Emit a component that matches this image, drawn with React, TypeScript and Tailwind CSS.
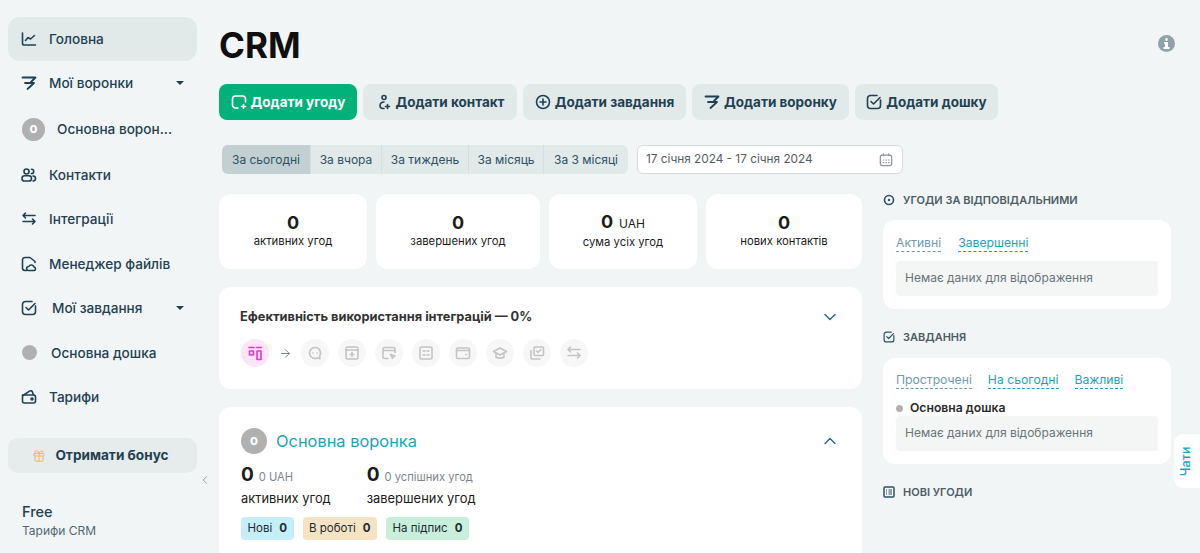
import { ReactNode } from 'react';
import { ArrowRight, ChevronDown, ChevronLeft, ChevronUp, Gift } from 'lucide-react';

const Stroke = ({ children, size = 16, className = '', weight = 1.6 }: { children: ReactNode; size?: number; className?: string; weight?: number }) => (
  <svg width={size} height={size} viewBox="0 0 16 16" fill="none" stroke="currentColor" strokeWidth={weight} strokeLinecap="round" strokeLinejoin="round" className={`shrink-0 ${className}`}>
    {children}
  </svg>
);

const ChartIcon = () => (
  <Stroke>
    <path d="M1.5 2v10.5a1.5 1.5 0 0 0 1.5 1.5h11.5" />
    <path d="M4.5 9.5l2.5-3 2.5 1.5 4-3.5" />
  </Stroke>
);
const FunnelIcon = ({ size = 16 }: { size?: number }) => (
  <Stroke size={size} weight={1.8}>
    <path d="M1.5 2.5h13L10 7" />
    <path d="M4 8h9l-6.500 6" />
  </Stroke>
);
const UsersIcon = () => (
  <Stroke>
    <circle cx="5.5" cy="4.5" r="2.5" />
    <path d="M10.5 2.2a2.2 2.2 0 0 1 0 4.4" />
    <rect x="1" y="8.8" width="9.5" height="5.2" rx="2.6" />
    <path d="M12 9a2.5 2.5 0 0 1 0 5" />
  </Stroke>
);
const SwapIcon = ({ weight = 1.6 }: { weight?: number }) => (
  <Stroke weight={weight}>
    <path d="M4.5 2.5L2 5l2.5 2.5M2 5h12" transform="translate(0 -.5)" />
    <path d="M11.5 8.5L14 11l-2.5 2.5M14 11H2" transform="translate(0 -.5)" />
  </Stroke>
);
const FileIcon = () => (
  <Stroke>
    <path d="M5.5 14.5H4A2.5 2.5 0 0 1 1.500 12V4A2.500 2.500 0 0 1 4 1.500h5l5 4v1" />
    <path d="M7.500 14.500a2 2 0 0 1 .3-4 2.800 2.800 0 0 1 5.200.5 1.800 1.800 0 0 1 .2 3.500z" />
  </Stroke>
);
const TaskIcon = ({ size = 16 }: { size?: number }) => (
  <Stroke size={size}>
    <path d="M14.500 6v5.500a3 3 0 0 1-3 3h-7a3 3 0 0 1-3-3v-7a3 3 0 0 1 3-3H11" />
    <path d="M5 7.500l2.500 2.500 6.500-6.500" />
  </Stroke>
);
const WalletIcon = () => (
  <Stroke>
    <path d="M1.500 7.500v4.500a2 2 0 0 0 2 2h9a2 2 0 0 0 2-2V8a2 2 0 0 0-2-2h-11z" />
    <path d="M2 6.500L8.500 2.200a2 2 0 0 1 3 .8l1 3" />
    <circle cx="11" cy="10" r="1" />
  </Stroke>
);

const Avatar = ({ size }: { size: 'lg' | 'sm' }) => (
  <span className={`flex items-center justify-center rounded-full bg-[#b0b0b0] text-white font-bold shrink-0 ${size === 'lg' ? 'w-[26px] h-[26px] text-[13px]' : 'w-[23px] h-[23px] text-[13px]'}`}>
    о
  </span>
);

const Caret = () => <span className="ml-auto mr-[13px] w-0 h-0 border-x-[4px] border-x-transparent border-t-[4px] border-t-[#1f4152]" />;

const SideItem = ({ icon, label, active, caret, indent = 'gap-[12px]', height = 'h-[44.5px]' }: { icon: ReactNode; label: string; active?: boolean; caret?: boolean; indent?: string; height?: string }) => (
  <div className={`flex items-center ${indent} ${height} pl-[13px] rounded-xl text-[13.6px] font-medium text-[#1f4152] ${active ? 'bg-[#e2e9e9]' : ''}`}>
    {icon}
    <span className="truncate">{label}</span>
    {caret && <Caret />}
  </div>
);

const Sidebar = () => (
  <aside className="w-[205px] shrink-0 pl-2 pr-2 pt-[17px] relative">
    <SideItem icon={<ChartIcon />} label="Головна" active height="h-[44px]" />
    <SideItem icon={<FunnelIcon />} label="Мої воронки" caret height="h-[44px]" />
    <div className="pl-[1px]">
      <SideItem icon={<Avatar size="sm" />} label="Основна ворон..." height="h-[48px]" />
    </div>
    <SideItem icon={<UsersIcon />} label="Контакти" height="h-[44px]" />
    <SideItem icon={<SwapIcon />} label="Інтеграції" height="h-[44.5px]" />
    <SideItem icon={<FileIcon />} label="Менеджер файлів" />
    <SideItem icon={<TaskIcon />} label="Мої завдання" caret indent="gap-[15px]" />
    <div className="flex items-center h-[44.5px] pl-[14px] gap-[14px] text-[13.6px] font-medium text-[#1f4152]">
      <span className="w-[15px] h-[15px] rounded-full bg-[#b0b0b0]" />
      <span>Основна дошка</span>
    </div>
    <SideItem icon={<WalletIcon />} label="Тарифи" />
    <div className="mt-[18.500px] h-[35px] flex items-center justify-center gap-[9px] pr-[4px] rounded-[10px] bg-[#e6ecec] text-[13.6px] font-bold text-[#1f4152]">
      <Gift size={14} strokeWidth={1.6} className="text-[#f9b25d]" />
      Отримати бонус
    </div>
    <ChevronLeft size={14} strokeWidth={1.6} className="absolute left-[198px] top-[473px] text-[#8f989c]" />
    <div className="mt-[30px] pl-[14px] text-[14.5px] font-medium leading-[18px] text-[#1f4152]">Free</div>
    <div className="mt-[1px] pl-[14px] text-[12px] leading-[17px] text-[#4f6875]">Тарифи CRM</div>
  </aside>
);

const ActionButton = ({ icon, label, width, primary }: { icon: ReactNode; label: string; width: string; primary?: boolean }) => (
  <button className={`${width} h-9 flex items-center justify-center gap-[4px] rounded-lg text-[13.5px] font-bold ${primary ? 'bg-[#00b27a] text-white' : 'bg-[#e2e9e9] text-[#1f4152]'}`}>
    {icon}
    {label}
  </button>
);

const periods = [
  { label: 'За сьогодні', width: 'w-[89px]', active: true },
  { label: 'За вчора', width: 'w-[71px]' },
  { label: 'За тиждень', width: 'w-[87px]' },
  { label: 'За місяць', width: 'w-[75px]' },
  { label: 'За 3 місяці', width: 'w-[84px]' },
];

const StatCard = ({ value, unit, label, width }: { value: string; unit?: string; label: string; width: string }) => (
  <div className={`${width} h-[75px] bg-white rounded-xl flex flex-col items-center justify-center pb-[4px] text-[#1c1c1c]`}>
    <div className="text-[18px] font-bold leading-[24px]">
      {value}
      {unit && <span className="ml-[6px] text-[12px] font-normal">{unit}</span>}
    </div>
    <div className="-mt-[2px] text-[11.3px] leading-[16px]">{label}</div>
  </div>
);

const RoundIcon = ({ children, pink }: { children: ReactNode; pink?: boolean }) => (
  <span className={`w-7 h-7 rounded-full flex items-center justify-center ${pink ? 'bg-[#fce6f8] text-[#ee2fd6]' : 'bg-[#f7f7f7] text-[#c4c4c4]'}`}>{children}</span>
);

const integrationIcons = [
  <Stroke key="chat"><path d="M8 2.500a5.500 5.500 0 1 0 2.800 10.200l2.200 1-.4-2.600A5.500 5.500 0 0 0 8 2.500z" /><path d="M6 8h.01M10 8h.01" /></Stroke>,
  <Stroke key="cal"><rect x="2" y="2" width="12" height="12" rx="1.500" /><path d="M2 5h12M8 7.500v4M6 9.500h4" /></Stroke>,
  <Stroke key="cursor"><path d="M7 13.500H3.500A1.500 1.500 0 0 1 2 12V4a1.500 1.500 0 0 1 1.500-1.500h9A1.500 1.500 0 0 1 14 4v3.500M2 5.500h12" /><path d="M9.500 9.500l4.500 1.500-1.800.8-.7 1.700z" /></Stroke>,
  <Stroke key="form"><rect x="2" y="2" width="12" height="12" rx="1.500" /><path d="M5 6h2M9 6h2M5 10h2M9 10h2" /></Stroke>,
  <Stroke key="wallet"><rect x="1.500" y="3" width="13" height="10.500" rx="1.500" /><path d="M1.500 5.500h13M11 9.500h.5" /></Stroke>,
  <Stroke key="cap"><path d="M8 3L1.500 6.500 8 10l6.500-3.500z" /><path d="M4 8.500v3.500c2 1.500 6 1.500 8 0V8.500" /></Stroke>,
  <Stroke key="copy"><rect x="5" y="2" width="9.500" height="8.500" rx="1" /><path d="M2 5.500V13a1 1 0 0 0 1 1h8M7.500 6l1.500 1.500 3-3" /></Stroke>,
  <SwapIcon key="swap" />,
];

const Tag = ({ label, bg }: { label: string; bg: string }) => (
  <span className={`h-[23px] flex items-center gap-[7px] px-[6.500px] rounded-[4px] text-[11.5px] text-[#1c2b33] ${bg}`}>
    {label}
    <b className="font-bold">0</b>
  </span>
);

const DashedTab = ({ label, muted }: { label: string; muted?: boolean }) => (
  <span className={`border-b border-dashed text-[12.2px] leading-[17px] ${muted ? 'text-[#6f9aaf] border-[#6f9aaf]' : 'text-[#1ba3bd] border-[#1ba3bd]'}`}>{label}</span>
);

const Empty = () => (
  <div className="h-[35px] flex items-center px-[9px] pb-[1px] bg-[#f4f6f6] rounded text-[12px] text-[#6a7479]">Немає даних для відображення</div>
);

const SectionTitle = ({ icon, label }: { icon: ReactNode; label: string }) => (
  <div className="flex items-center gap-2 text-[11px] font-semibold text-[#4e5c64] leading-4">
    <span className="text-[#2d5264]">{icon}</span>
    {label}
  </div>
);

export default function App() {
  return (
    <div className="w-[1200px] h-[553px] overflow-hidden flex bg-[#f1f5f6] relative font-['Inter','Noto_Sans',sans-serif]">
      <Sidebar />
      <main className="flex-1 pl-[14px] pr-[25px] pt-[24px] min-w-0">
        <div className="flex items-center justify-between h-[42px]">
          <h1 className="text-[35px] font-bold text-[#0f0f0f] leading-[42px]">CRM</h1>
          <span className="w-[17px] h-[17px] rounded-full bg-[#8ea2a8] flex items-center justify-center -mt-[4px]">
            <svg width="9" height="11" viewBox="0 0 9 11" fill="#fff">
              <circle cx="4.500" cy="1.500" r="1.400" />
              <path d="M2 4h4v5h1.500v2h-6V9H3V6H2z" />
            </svg>
          </span>
        </div>
        <div className="flex gap-[6px] mt-[18px]">
          <ActionButton primary width="w-[138px]" label="Додати угоду" icon={<Stroke><path d="M7 14H4.500A3 3 0 0 1 1.500 11V5a3 3 0 0 1 3-3h7a3 3 0 0 1 3 3v3" /><path d="M12.500 10.500v4M10.500 12.500h4" /></Stroke>} />
          <ActionButton width="w-[154px]" label="Додати контакт" icon={<Stroke><circle cx="8" cy="3.500" r="2" /><path d="M8 8a4 4 0 0 0-4 3.500 3 3 0 0 0 3 3h1" /><path d="M11.500 10.500v4M9.500 12.500h4" /></Stroke>} />
          <ActionButton width="w-[163px]" label="Додати завдання" icon={<Stroke><circle cx="8" cy="8" r="6.500" /><path d="M8 5v6M5 8h6" /></Stroke>} />
          <ActionButton width="w-[157px]" label="Додати воронку" icon={<FunnelIcon />} />
          <ActionButton width="w-[143px]" label="Додати дошку" icon={<TaskIcon />} />
        </div>
        <div className="flex items-center gap-[9px] mt-[25px] ml-[3px]">
          <div className="flex h-[29px] rounded-md overflow-hidden bg-[#e2e9e9] divide-x divide-[#d6dfdf]">
            {periods.map((p) => (
              <span key={p.label} className={`${p.width} flex items-center justify-center text-[12px] text-[#2d5264] ${p.active ? 'bg-[#c3d0d1]' : ''}`}>
                {p.label}
              </span>
            ))}
          </div>
          <div className="w-[266px] h-[29px] bg-white border border-[#d5dbdd] rounded-md flex items-center justify-between pl-[8px] pr-[9px] text-[11.8px] text-[#555d61]">
            17 січня 2024 - 17 січня 2024
            <Stroke size={14} weight={1.4} className="text-[#8d9599]">
              <rect x="1.500" y="2.500" width="13" height="12" rx="2.500" />
              <path d="M5 1v2M11 1v2M5 8h.5M8 8h.5M11 8h.5M5 11h.5M8 11h.5M11 11h.5" />
            </Stroke>
          </div>
        </div>
        <div className="flex gap-[21px] mt-[20px]">
          <div className="w-[643px] shrink-0">
            <div className="flex gap-[9px]">
              <StatCard width="w-[148px]" value="0" label="активних угод" />
              <StatCard width="w-[164px]" value="0" label="завершених угод" />
              <StatCard width="w-[148px]" value="0" unit="UAH" label="сума усіх угод" />
              <StatCard width="w-[156px]" value="0" label="нових контактів" />
            </div>
            <section className="mt-[18px] h-[102px] bg-white rounded-xl pl-[22px] pr-[24px] pt-[20px]">
              <div className="flex items-center justify-between">
                <span className="-ml-[1px] text-[12.8px] font-bold text-[#333] leading-[18px]">Ефективність використання інтеграцій — 0%</span>
                <ChevronDown size={20} strokeWidth={1.8} className="text-[#2d6d85] -mr-[2px]" />
              </div>
              <div className="flex items-center gap-[9px] mt-[12px]">
                <RoundIcon pink>
                  <Stroke><path d="M2 2.500h5M9.500 2.500h5" /><rect x="2.500" y="6" width="4" height="4" /><rect x="10" y="6" width="4" height="8.500" /></Stroke>
                </RoundIcon>
                <ArrowRight size={13} strokeWidth={1.6} className="text-[#66767e] ml-[1px]" />
                {integrationIcons.map((icon, i) => (
                  <RoundIcon key={i}>{icon}</RoundIcon>
                ))}
              </div>
            </section>
            <section className="mt-[18px] h-[170px] bg-white rounded-t-xl pl-[22px] pr-[24px] pt-[21px]">
              <div className="flex items-center gap-[9px]">
                <Avatar size="lg" />
                <span className="text-[16.4px] font-normal text-[#1ba3bd] leading-6">Основна воронка</span>
                <ChevronUp size={20} strokeWidth={1.8} className="ml-auto text-[#2d6d85] -mr-[2px]" />
              </div>
              <div className="flex gap-[36px] mt-[7px] text-[#1c1c1c]">
                <div>
                  <div className="flex items-baseline gap-[5px] h-[24px]">
                    <span className="text-[19px] font-bold">0</span>
                    <span className="text-[11.2px] text-[#7d858a]">0 UAH</span>
                  </div>
                  <div className="mt-[4px] text-[12.9px] leading-[19px]">активних угод</div>
                </div>
                <div>
                  <div className="flex items-baseline gap-[5px] h-[24px]">
                    <span className="text-[19px] font-bold">0</span>
                    <span className="text-[11.2px] text-[#7d858a]">0 успішних угод</span>
                  </div>
                  <div className="mt-[4px] text-[12.9px] leading-[19px]">завершених угод</div>
                </div>
              </div>
              <div className="flex gap-[9px] mt-[9px]">
                <Tag label="Нові" bg="bg-[#c4eef8]" />
                <Tag label="В роботі" bg="bg-[#f5e4c4]" />
                <Tag label="На підпис" bg="bg-[#c8efdc]" />
              </div>
            </section>
          </div>
          <div className="w-[288px] shrink-0 -mt-[2px]">
            <SectionTitle label="УГОДИ ЗА ВІДПОВІДАЛЬНИМИ" icon={<svg width="12" height="12" viewBox="0 0 12 12" fill="none"><circle cx="6" cy="6" r="4.500" stroke="currentColor" strokeWidth="1.600" /><circle cx="6" cy="6" r="1.200" fill="currentColor" /></svg>} />
            <div className="mt-[12px] h-[89px] bg-white rounded-xl px-[13px] pt-[14px]">
              <div className="flex gap-[17px]">
                <DashedTab label="Активні" muted />
                <DashedTab label="Завершенні" />
              </div>
              <div className="mt-[9px]"><Empty /></div>
            </div>
            <div className="mt-[20px]">
              <SectionTitle label="ЗАВДАННЯ" icon={<TaskIcon size={12} />} />
            </div>
            <div className="mt-[13px] h-[106px] bg-white rounded-xl px-[13px] pt-[13px]">
              <div className="flex gap-[16px]">
                <DashedTab label="Прострочені" muted />
                <DashedTab label="На сьогодні" />
                <DashedTab label="Важливі" />
              </div>
              <div className="flex items-center gap-[7px] mt-[11px] h-[16px] text-[12.2px] font-semibold text-[#2a2a2a]">
                <span className="w-[7px] h-[7px] rounded-full bg-[#b0b0b0]" />
                Основна дошка
              </div>
              <div className="mt-0"><Empty /></div>
            </div>
            <div className="mt-[20px]">
              <SectionTitle label="НОВІ УГОДИ" icon={<svg width="12" height="12" viewBox="0 0 12 12" fill="none" stroke="currentColor" strokeWidth="1.500"><rect x="1" y="1" width="10" height="10" rx="1" /><path d="M3 4h1M5.500 4H9M3 6h1M5.500 6H9M3 8h1M5.500 8H9" strokeWidth="1.100" /></svg>} />
            </div>
          </div>
        </div>
      </main>
      <div className="absolute right-0 top-[434px] w-[26px] h-[54px] bg-white rounded-l-[9px] flex items-center justify-center">
        <span className="text-[12.5px] font-medium text-[#1ba3bd] -rotate-90">Чати</span>
      </div>
    </div>
  );
}
